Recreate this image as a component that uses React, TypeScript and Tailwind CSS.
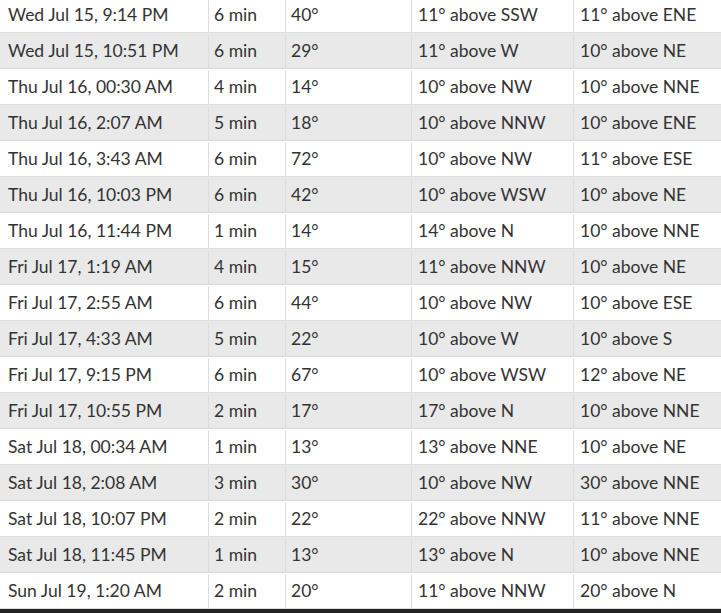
const rows: [string, string, string, string, string][] = [
  ["Wed Jul 15, 9:14 PM", "6 min", "40°", "11° above SSW", "11° above ENE"],
  ["Wed Jul 15, 10:51 PM", "6 min", "29°", "11° above W", "10° above NE"],
  ["Thu Jul 16, 00:30 AM", "4 min", "14°", "10° above NW", "10° above NNE"],
  ["Thu Jul 16, 2:07 AM", "5 min", "18°", "10° above NNW", "10° above ENE"],
  ["Thu Jul 16, 3:43 AM", "6 min", "72°", "10° above NW", "11° above ESE"],
  ["Thu Jul 16, 10:03 PM", "6 min", "42°", "10° above WSW", "10° above NE"],
  ["Thu Jul 16, 11:44 PM", "1 min", "14°", "14° above N", "10° above NNE"],
  ["Fri Jul 17, 1:19 AM", "4 min", "15°", "11° above NNW", "10° above NE"],
  ["Fri Jul 17, 2:55 AM", "6 min", "44°", "10° above NW", "10° above ESE"],
  ["Fri Jul 17, 4:33 AM", "5 min", "22°", "10° above W", "10° above S"],
  ["Fri Jul 17, 9:15 PM", "6 min", "67°", "10° above WSW", "12° above NE"],
  ["Fri Jul 17, 10:55 PM", "2 min", "17°", "17° above N", "10° above NNE"],
  ["Sat Jul 18, 00:34 AM", "1 min", "13°", "13° above NNE", "10° above NE"],
  ["Sat Jul 18, 2:08 AM", "3 min", "30°", "10° above NW", "30° above NNE"],
  ["Sat Jul 18, 10:07 PM", "2 min", "22°", "22° above NNW", "11° above NNE"],
  ["Sat Jul 18, 11:45 PM", "1 min", "13°", "13° above N", "10° above NNE"],
  ["Sun Jul 19, 1:20 AM", "2 min", "20°", "11° above NNW", "20° above N"],
];

export default function App() {
  return (
    <div
      className="w-[721px] h-[613px] overflow-hidden bg-[#222222]"
      style={{ fontFamily: "Lato, 'Open Sans', sans-serif" }}
    >
      <div className="-mt-[3px] bg-white text-[17.5px] text-[#333333]">
        {rows.map((r, i) => (
          <div
            key={i}
            className={
              "flex h-[36px] pt-[2px] border-b border-[#dcdcdc] " +
              (i % 2 === 1 ? "bg-[#e9e9e9]" : "bg-white")
            }
          >
            <div className="w-[209px] shrink-0 flex items-center pl-[8px] border-r border-[#dcdcdc] whitespace-nowrap">
              {r[0]}
            </div>
            <div className="w-[77px] shrink-0 flex items-center pl-[5px] border-r border-[#dcdcdc] whitespace-nowrap">
              {r[1]}
            </div>
            <div className="w-[126px] shrink-0 flex items-center pl-[5px] border-r border-[#dcdcdc] whitespace-nowrap">
              {r[2]}
            </div>
            <div className="w-[162px] shrink-0 flex items-center pl-[6px] border-r border-[#dcdcdc] whitespace-nowrap">
              {r[3]}
            </div>
            <div className="flex-1 flex items-center pl-[6px] whitespace-nowrap">
              {r[4]}
            </div>
          </div>
        ))}
      </div>
    </div>
  );
}
